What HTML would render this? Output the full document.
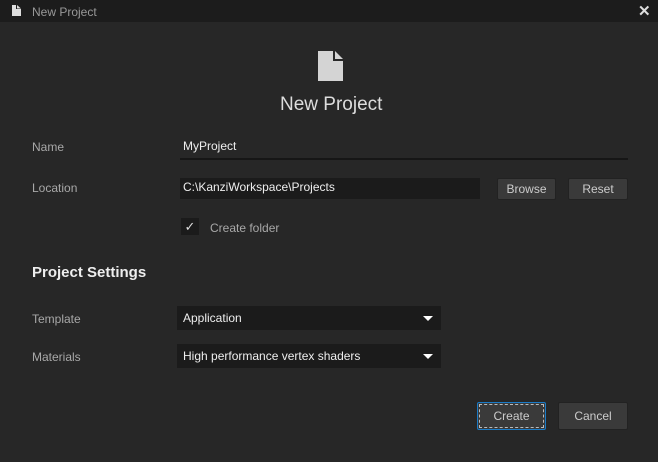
<!DOCTYPE html><html><head><style>
body{margin:0;width:658px;height:462px;background:#272727;font-family:"Liberation Sans",sans-serif;position:relative;overflow:hidden;color:#ddd}
.a{position:absolute}
.lbl{font-size:12px;color:#a8a8a8}
.btn{background:#3a3a3a;border:1px solid #222;border-radius:2px;color:#ccc;font-size:12px;text-align:center;box-sizing:border-box}
.dd{background:#1b1b1b;font-size:12px;color:#eee;box-sizing:border-box;padding-left:6px}
.tri{position:absolute;right:8px;width:0;height:0;border-left:5px solid transparent;border-right:5px solid transparent;border-top:5px solid #fff}
</style></head><body>
<div class="a" style="left:0;top:0;width:658px;height:22px;background:#1c1c1c"></div>
<svg class="a" style="left:12px;top:5px" width="9" height="11"><path d="M0 0H4V4H9V11H0Z" fill="#ddd"/><path d="M5 0L9 3.5H5Z" fill="#ddd"/></svg>
<div class="a" style="left:32px;top:5px;font-size:12px;color:#999">New Project</div>
<div class="a" style="left:638px;top:2px;font-size:15px;color:#ddd;font-weight:bold">✕</div>
<svg class="a" style="left:318px;top:51px" width="25" height="30"><path d="M0 0H15V10H25V30H0Z" fill="#d4d4d4"/><path d="M17 0L25 8H17Z" fill="#d4d4d4"/></svg>
<div class="a" style="left:280px;top:94px;font-size:19px;color:#ddd">New Project</div>
<div class="a lbl" style="left:32px;top:140px">Name</div>
<div class="a" style="left:183px;top:139px;font-size:12px;color:#eee">MyProject</div>
<div class="a" style="left:180px;top:158px;width:448px;height:2px;background:#161616"></div>
<div class="a lbl" style="left:32px;top:181px">Location</div>
<div class="a dd" style="left:180px;top:178px;width:300px;height:21px;padding-left:3px;line-height:19px">C:\KanziWorkspace\Projects</div>
<div class="a btn" style="left:497px;top:178px;width:59px;height:22px;line-height:20px">Browse</div>
<div class="a btn" style="left:568px;top:178px;width:60px;height:22px;line-height:20px">Reset</div>
<div class="a" style="left:181px;top:218px;width:18px;height:17px;background:#1b1b1b;color:#ddd;font-size:13px;text-align:center;line-height:17px">✓</div>
<div class="a lbl" style="left:210px;top:221px">Create folder</div>
<div class="a" style="left:32px;top:264px;font-size:15px;font-weight:bold;color:#eee">Project Settings</div>
<div class="a lbl" style="left:32px;top:312px">Template</div>
<div class="a dd" style="left:177px;top:306px;width:264px;height:24px;line-height:24px">Application<div class="tri" style="top:10px"></div></div>
<div class="a lbl" style="left:32px;top:350px">Materials</div>
<div class="a dd" style="left:177px;top:344px;width:264px;height:24px;line-height:24px">High performance vertex shaders<div class="tri" style="top:10px"></div></div>
<div class="a btn" style="left:477px;top:402px;width:69px;height:28px;border:1px solid #1a7bc7;padding:1px"><div style="border:1px dashed #bbb;height:100%;box-sizing:border-box;line-height:22px">Create</div></div>
<div class="a btn" style="left:558px;top:402px;width:70px;height:28px;line-height:26px">Cancel</div>
</body></html>
